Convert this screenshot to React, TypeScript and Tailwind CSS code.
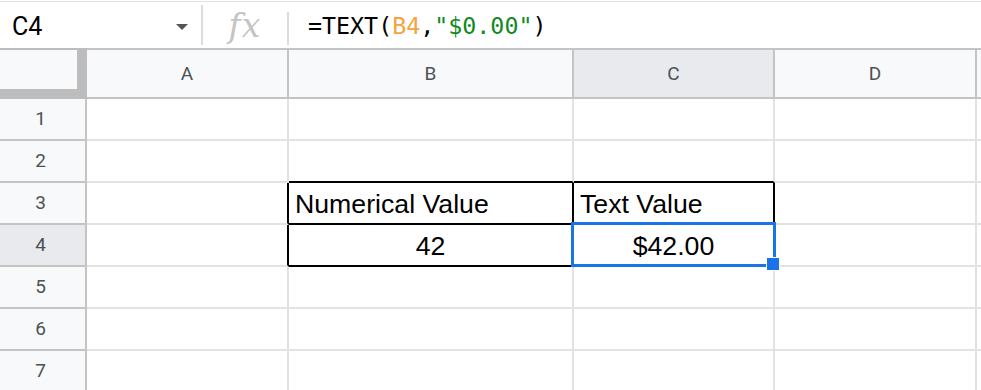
import React from "react";

const cols = ["A", "B", "C", "D", ""];
const rows = [1, 2, 3, 4, 5, 6, 7];

const ui = { fontFamily: "Roboto, 'Liberation Sans', sans-serif" };
const cellFont = { fontFamily: "'Liberation Sans', Arial, sans-serif" };

type Cell = { text?: string; align?: "left" | "center"; right?: boolean; bottom?: boolean; selected?: boolean };

// cells that sit inside or around the bordered table (B3:C4)
const data: Record<string, Cell> = {
  B2: { bottom: true },
  C2: { bottom: true },
  A3: { right: true },
  A4: { right: true },
  B3: { text: "Numerical Value", right: true, bottom: true },
  C3: { text: "Text Value", right: true, bottom: true },
  B4: { text: "42", align: "center", right: true, bottom: true },
  C4: { text: "$42.00", align: "center", right: true, bottom: true, selected: true },
};

function FormulaBar() {
  return (
    <div className="mt-px flex h-[47px] items-center border-t border-[#e3e3e3] bg-white" style={ui}>
      <div className="flex w-[201px] items-center pt-[2px] pl-[12px] pr-[13px]">
        <span className="flex-1 text-[25px] leading-none text-black">C4</span>
        <span className="mt-[2px] h-0 w-0 border-x-[6px] border-t-[6px] border-x-transparent border-t-[#555]" />
      </div>
      <div className="h-[40px] w-[2px] bg-[#dadce0]" />
      <div className="flex w-[84px] justify-center">
        <span
          className="text-[33px] italic leading-none tracking-[1px] text-[#c4c4c4]"
          style={{ fontFamily: "'DejaVu Serif', serif" }}
        >
          fx
        </span>
      </div>
      <div className="mt-[6px] h-[33px] w-[2px] bg-[#dadce0]" />
      <div
        className="pt-[2px] pl-[19px] text-[23.3px] leading-none text-black"
        style={{ fontFamily: "'DejaVu Sans Mono', 'Liberation Mono', monospace" }}
      >
        =TEXT(<span className="text-[#f6a23f]">B4</span>,<span className="text-[#0f8a1e]">"$0.00"</span>)
      </div>
    </div>
  );
}

export default function App() {
  return (
    <div className="h-[390px] w-[981px] overflow-hidden bg-white">
      <FormulaBar />
      <div className="grid grid-cols-[87px_202px_285px_201px_202px_1fr] grid-rows-[51px_repeat(7,42px)]">
        <div className="border-t-2 border-r-[10px] border-b-[10px] border-[#bdbdbd] bg-[#f8f9fa]" />
        {cols.map((c) => (
          <div
            key={c || "E"}
            className={`flex items-center justify-center border-t-2 border-r-2 border-b-2 border-[#c4c4c4] pt-[2px] text-[19px] text-[#4d5156] ${
              c === "C" ? "bg-[#e8eaed]" : "bg-[#f8f9fa]"
            }`}
            style={ui}
          >
            {c}
          </div>
        ))}

        {rows.map((r) => (
          <React.Fragment key={r}>
            <div
              className={`flex items-center justify-center border-r-2 border-b-2 border-[#c4c4c4] pr-1 text-[19px] text-[#4d5156] ${
                r === 4 ? "bg-[#e8eaed]" : "bg-[#f8f9fa]"
              }`}
              style={ui}
            >
              {r}
            </div>
            {cols.map((c) => {
              const cell = data[`${c}${r}`] || {};
              return (
                <div
                  key={c || "E"}
                  className={`relative flex items-end border-r-2 border-b-2 bg-white pb-[4px] text-[26.7px] leading-[30px] text-black ${
                    cell.right ? "border-r-black" : "border-r-[#e2e2e3]"
                  } ${cell.bottom ? "border-b-black" : "border-b-[#e2e2e3]"} ${
                    cell.align === "center" ? "justify-center" : "pl-[6px]"
                  }`}
                  style={cellFont}
                >
                  {cell.text}
                  {cell.selected && (
                    <div className="absolute -top-[3px] -left-[3px] -right-[3px] -bottom-[2px] z-10 border-[3px] border-[#1a73e8]">
                      <div className="absolute -right-[7px] -bottom-[7px] h-[14px] w-[14px] border border-white bg-[#1a73e8]" />
                    </div>
                  )}
                </div>
              );
            })}
          </React.Fragment>
        ))}
      </div>
    </div>
  );
}
